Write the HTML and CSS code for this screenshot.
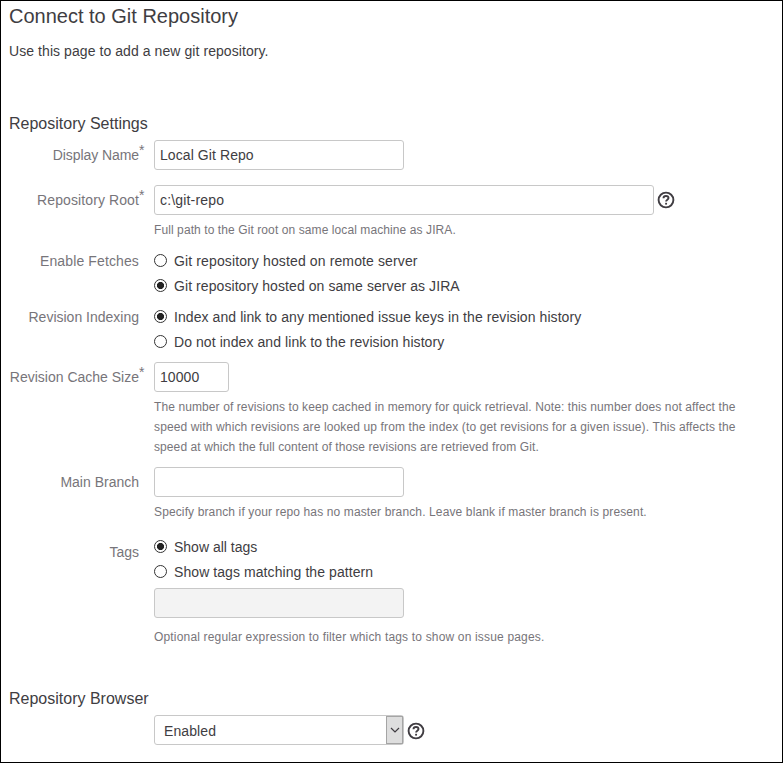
FILE: index.html
```html
<!DOCTYPE html>
<html lang="en">
<head>
<meta charset="utf-8">
<title>Connect to Git Repository</title>
<link rel="stylesheet" href="styles.css">
</head>
<body>
<main class="page">
  <h1 class="title">Connect to Git Repository</h1>
  <p class="intro">Use this page to add a new git repository.</p>
  <form>
    <h2 class="section">Repository Settings</h2>
    <div class="row display">
      <div class="label"><span class="tight">Display Name</span><span class="req">*</span></div>
      <div class="field"><input class="text medium" type="text" value="Local Git Repo"></div>
    </div>
    <div class="row root">
      <div class="label"><span class="track-2">Repository Root</span><span class="req">*</span></div>
      <div class="field">
        <div class="control">
          <input class="text long track-4" type="text" value="c:\git-repo">
          <svg class="help" viewBox="0 0 18 18"><circle cx="9" cy="9" r="7.4"/><path d="M6.5 7.2C6.5 5.7 7.6 5 9 5s2.5.8 2.5 2.1c0 1.6-2.4 1.7-2.4 3.4"/><path d="M9.1 11.8v1.8"/></svg>
        </div>
        <p class="desc">Full path to the Git root on same local machine as JIRA.</p>
      </div>
    </div>
    <div class="row fetches">
      <div class="label option-label"><span class="track-3">Enable Fetches</span></div>
      <div class="field">
        <label class="option"><input type="radio" name="fetch"><span class="track-3">Git repository hosted on remote server</span></label>
        <label class="option"><input type="radio" name="fetch" checked><span class="track-1">Git repository hosted on same server as JIRA</span></label>
      </div>
    </div>
    <div class="row indexing">
      <div class="label option-label">Revision Indexing</div>
      <div class="field">
        <label class="option"><input type="radio" name="index" checked><span class="track-1">Index and link to any mentioned issue keys in the revision history</span></label>
        <label class="option"><input type="radio" name="index"><span class="track-1">Do not index and link to the revision history</span></label>
      </div>
    </div>
    <div class="row cache">
      <div class="label">Revision Cache Size<span class="req">*</span></div>
      <div class="field">
        <input class="text short" type="text" value="10000">
        <p class="desc"><span class="track-2">The number of revisions to keep cached in memory for quick retrieval. Note: this number does not affect the</span><br><span class="track-3">speed with which revisions are looked up from the index (to get revisions for a given issue). This affects the</span><br>speed at which the full content of those revisions are retrieved from Git.</p>
      </div>
    </div>
    <div class="row branch">
      <div class="label">Main Branch</div>
      <div class="field">
        <input class="text medium" type="text">
        <p class="desc"><span class="track-3">Specify branch if your repo has no master branch. Leave blank if master branch is present.</span></p>
      </div>
    </div>
    <div class="row tags">
      <div class="label tags-label">Tags</div>
      <div class="field">
        <label class="option"><input type="radio" name="tags" checked><span>Show all tags</span></label>
        <label class="option"><input type="radio" name="tags"><span class="track-1">Show tags matching the pattern</span></label>
        <input class="text medium pattern" type="text" disabled>
        <p class="desc"><span class="track-4">Optional regular expression to filter which tags to show on issue pages.</span></p>
      </div>
    </div>
    <h2 class="section browser">Repository Browser</h2>
    <div class="row">
      <div class="label"></div>
      <div class="field control">
        <div class="select" role="combobox" tabindex="0"><span class="value">Enabled</span><span class="arrow"><svg viewBox="0 0 10 6"><path d="M1 1l4 4 4-4"/></svg></span></div>
        <svg class="help lower" viewBox="0 0 18 18"><circle cx="9" cy="9" r="7.4"/><path d="M6.5 7.2C6.5 5.7 7.6 5 9 5s2.5.8 2.5 2.1c0 1.6-2.4 1.7-2.4 3.4"/><path d="M9.1 11.8v1.8"/></svg>
      </div>
    </div>
  </form>
</main>
</body>
</html>
```
FILE: styles.css
```css
* { box-sizing: border-box; }
body {
  margin: 0;
  background: #fff;
  color: #403d42;
  font: 14px/20px "Liberation Sans", Arial, sans-serif;
}
.page {
  height: 763px;
  padding: 3px 8px 0;
  border: 1px solid #000;
  overflow: hidden;
}
h1, h2, p { margin: 0; font-weight: 400; }
.title { font-size: 20px; line-height: 24px; }
.intro { margin-top: 13px; letter-spacing: 0.07px; }
.section { margin-top: 53px; font-size: 16px; line-height: 20px; }
.browser { margin: 42px 0 6px; }
.row { display: flex; gap: 15px; }
.label {
  position: relative;
  width: 130px;
  padding-top: 5px;
  flex: none;
  color: #77757a;
  text-align: right;
  white-space: nowrap;
}
.req { position: absolute; left: 100%; top: 0; }
.text {
  display: block;
  height: 30px;
  padding: 0 5px;
  border: 1px solid #c8c8c8;
  border-radius: 3px;
  background: #fff;
  color: inherit;
  font: inherit;
  letter-spacing: 0.08px;
}
.medium { width: 250px; }
.long { width: 500px; }
.short { width: 75px; }
.pattern { margin-top: 4px; background: #f3f3f3; }
.desc {
  margin-top: 5px;
  color: #77757a;
  font-size: 12px;
  line-height: 20px;
  letter-spacing: 0.09px;
  white-space: nowrap;
}
.tight { letter-spacing: -0.08px; }
.track-1 { letter-spacing: 0.075px; }
.track-2 { letter-spacing: 0.1px; }
.track-3 { letter-spacing: 0.125px; }
.track-4 { letter-spacing: 0.17px; }
.control { display: flex; align-items: center; gap: 3px; }
.help {
  width: 18px;
  height: 18px;
  fill: none;
  stroke: #403d42;
  stroke-width: 1.9;
}
.lower { margin-top: 2px; }
.option { display: flex; align-items: center; height: 25px; white-space: nowrap; }
.option input {
  appearance: none;
  width: 13px;
  height: 13px;
  margin: 0 7px 0 0;
  border: 1px solid #333;
  border-radius: 50%;
  background: #fff;
}
.option input:checked { background: radial-gradient(circle, #222 3.2px, #fff 3.9px); }
.option-label { padding-top: 3px; }
.tags-label { padding-top: 8px; }
.display { margin-top: 6px; }
.root { margin-top: 15px; }
.fetches { margin-top: 8px; }
.indexing { margin-top: 6px; }
.cache { margin-top: 8px; }
.branch { margin-top: 10px; }
.tags { margin-top: 12px; }
.tags .desc { margin-top: 9px; }
.select {
  display: flex;
  align-items: center;
  width: 250px;
  height: 30px;
  padding-left: 9px;
  border: 1px solid #c8c8c8;
  border-radius: 3px;
}
.value { flex: 1; padding-top: 2px; letter-spacing: 0.1px; }
.arrow {
  display: flex;
  align-items: center;
  justify-content: center;
  width: 17px;
  height: 28px;
  border: 1px solid #a5a5a5;
  background: #dedede;
}
.arrow svg { width: 10px; height: 6px; fill: none; stroke: #403d42; stroke-width: 1.2; }
```
